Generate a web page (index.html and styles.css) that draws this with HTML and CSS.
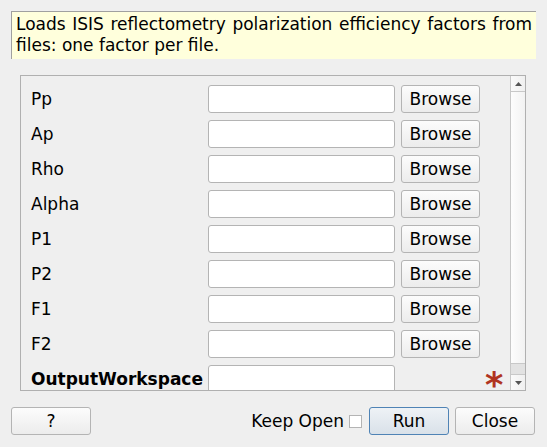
FILE: index.html
```html
<!DOCTYPE html>
<html>
<head>
<meta charset="utf-8">
<link rel="stylesheet" href="styles.css">
</head>
<body>
<div class="dialog">
  <div class="desc">Loads ISIS reflectometry polarization efficiency factors from files: one factor per file.</div>
  <div class="scrollarea">
    <div class="content">
      <div class="row"><span class="label">Pp</span><span class="field"></span><span class="btn browse">Browse</span></div>
      <div class="row"><span class="label">Ap</span><span class="field"></span><span class="btn browse">Browse</span></div>
      <div class="row"><span class="label">Rho</span><span class="field"></span><span class="btn browse">Browse</span></div>
      <div class="row"><span class="label">Alpha</span><span class="field"></span><span class="btn browse">Browse</span></div>
      <div class="row"><span class="label">P1</span><span class="field"></span><span class="btn browse">Browse</span></div>
      <div class="row"><span class="label">P2</span><span class="field"></span><span class="btn browse">Browse</span></div>
      <div class="row"><span class="label">F1</span><span class="field"></span><span class="btn browse">Browse</span></div>
      <div class="row"><span class="label">F2</span><span class="field"></span><span class="btn browse">Browse</span></div>
      <div class="row"><span class="label bold">OutputWorkspace</span><span class="field"></span><span class="star">*</span></div>
    </div>
    <div class="scrollbar">
      <div class="arrow up"><svg width="7" height="4" viewBox="0 0 7 4"><path d="M0 4 L3.5 0 L7 4 Z" fill="#555"/></svg></div>
      <div class="handle"></div>
      <div class="track"></div>
      <div class="arrow down"><svg width="7" height="4" viewBox="0 0 7 4"><path d="M0 0 L3.5 4 L7 0 Z" fill="#555"/></svg></div>
    </div>
  </div>
  <div class="footer">
    <span class="btn help">?</span>
    <span class="spacer"></span>
    <span class="keep">Keep Open</span>
    <span class="check"></span>
    <span class="btn run">Run</span>
    <span class="btn close">Close</span>
  </div>
</div>
</body>
</html>
```
FILE: styles.css
```css
html, body {
  margin: 0;
  padding: 0;
  background: #efefef;
}
body {
  font-family: "DejaVu Sans", sans-serif;
  font-size: 17px;
  color: #000;
}
.dialog {
  width: 547px;
  height: 447px;
  padding-top: 11px;
  box-sizing: border-box;
}
.desc {
  margin-left: 11px;
  width: 525px;
  height: 48px;
  box-sizing: border-box;
  background: #ffffdc;
  border-top: 1px solid #a0a0a0;
  border-left: 1px solid #a0a0a0;
  padding: 2px 4px 0 4px;
  line-height: 21px;
  text-align: justify;
}
.scrollarea {
  margin-top: 16px;
  margin-left: 20px;
  width: 506px;
  height: 316px;
  box-sizing: border-box;
  border: 1px solid #b0b0b0;
  display: flex;
  overflow: hidden;
}
.content {
  flex: 1;
  padding: 9px 0 0 10px;
  display: flex;
  flex-direction: column;
  gap: 7px;
}
.row {
  display: flex;
  align-items: center;
  height: 28px;
  flex: none;
}
.label {
  width: 177px;
  flex: none;
}
.bold {
  font-weight: bold;
}
.field {
  width: 187px;
  height: 28px;
  box-sizing: border-box;
  background: #fff;
  border: 1px solid #b4b4b4;
  border-radius: 3px;
  flex: none;
}
.btn {
  display: inline-flex;
  align-items: center;
  justify-content: center;
  height: 28px;
  box-sizing: border-box;
  border: 1px solid #b4b4b4;
  border-radius: 3px;
  background: linear-gradient(#fcfcfc, #ececec);
  flex: none;
}
.browse {
  width: 79px;
  margin-left: 6px;
}
.star {
  align-self: flex-start;
  margin-top: 16px;
  margin-left: 90px;
  height: 8px;
  color: #b0341f;
  font-size: 35px;
  font-weight: bold;
  line-height: 8px;
}
.scrollbar {
  width: 14px;
  flex: none;
  border-left: 1px solid #c8c8c8;
  display: flex;
  flex-direction: column;
  background: #e4e4e4;
}
.arrow {
  height: 15px;
  flex: none;
  display: flex;
  align-items: center;
  justify-content: center;
  background: linear-gradient(90deg, #fafafa, #f0f0f0);
}
.arrow.up {
  border-bottom: 1px solid #c8c8c8;
}
.arrow.down {
  border-top: 1px solid #c8c8c8;
}
.handle {
  flex: 1;
  background: linear-gradient(90deg, #fdfdfd, #f2f2f2);
}
.track {
  height: 10px;
  flex: none;
  border-top: 1px solid #c8c8c8;
  background: #e2e2e2;
}
.footer {
  margin-top: 16px;
  margin-left: 11px;
  width: 524px;
  display: flex;
  align-items: center;
}
.help {
  width: 80px;
}
.spacer {
  flex: 1;
}
.keep {
  margin-right: 5px;
}
.check {
  width: 13px;
  height: 13px;
  box-sizing: border-box;
  border: 1px solid #b4b4b4;
  background: #fff;
  margin-right: 7px;
}
.run {
  width: 80px;
  border-color: #4f83b5;
  background: linear-gradient(#eef2f6, #d9e1e9);
}
.close {
  width: 80px;
  margin-left: 6px;
}
```
